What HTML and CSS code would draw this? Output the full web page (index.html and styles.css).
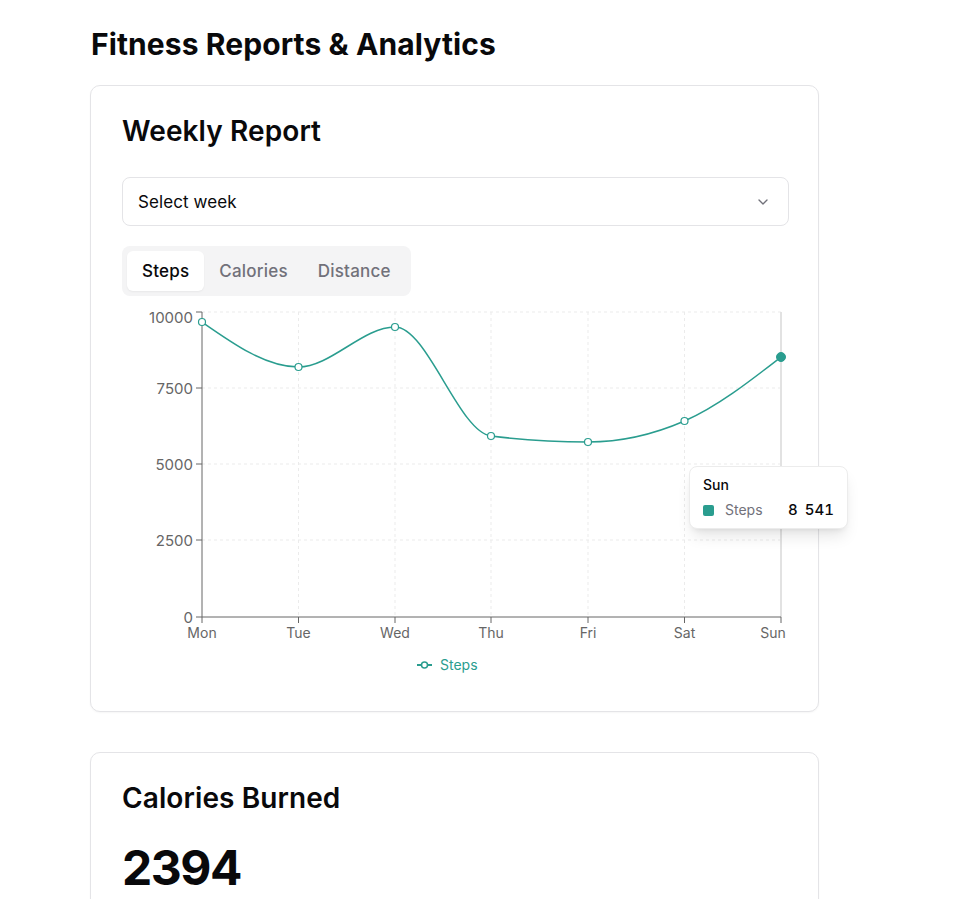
FILE: index.html
```html
<!DOCTYPE html>
<html lang="en">
<head>
<meta charset="utf-8">
<title>Fitness Reports &amp; Analytics</title>
<link rel="stylesheet" href="styles.css">
</head>
<body>
<main class="page">
  <h1 class="page-title">Fitness Reports &amp; Analytics</h1>

  <section class="card">
    <h2 class="card-title">Weekly Report</h2>
    <button class="select" type="button">
      <span>Select week</span>
      <svg class="chevron" width="16" height="16" viewBox="0 0 24 24" fill="none" stroke="currentColor" stroke-width="2" stroke-linecap="round" stroke-linejoin="round"><path d="m6 9 6 6 6-6"/></svg>
    </button>
    <div class="tabs">
      <button class="tab active" type="button">Steps</button>
      <button class="tab" type="button">Calories</button>
      <button class="tab" type="button">Distance</button>
    </div>

    <div class="chart">
      <svg class="chart-svg" width="667" height="384" viewBox="122 296 667 384">
        <g class="grid">
          <line x1="202" y1="312" x2="781" y2="312"/>
          <line x1="202" y1="388" x2="781" y2="388"/>
          <line x1="202" y1="464" x2="781" y2="464"/>
          <line x1="202" y1="540" x2="781" y2="540"/>
          <line x1="298.5" y1="312" x2="298.5" y2="617"/>
          <line x1="395" y1="312" x2="395" y2="617"/>
          <line x1="491" y1="312" x2="491" y2="617"/>
          <line x1="588" y1="312" x2="588" y2="617"/>
          <line x1="684.5" y1="312" x2="684.5" y2="617"/>
        </g>
        <line class="cursor" x1="781" y1="312" x2="781" y2="617"/>
        <g class="axis">
          <line x1="202" y1="312" x2="202" y2="617"/>
          <line x1="202" y1="617" x2="781" y2="617"/>
          <line x1="196" y1="312" x2="202" y2="312"/>
          <line x1="196" y1="388" x2="202" y2="388"/>
          <line x1="196" y1="464" x2="202" y2="464"/>
          <line x1="196" y1="540" x2="202" y2="540"/>
          <line x1="196" y1="617" x2="202" y2="617"/>
          <line x1="202" y1="617" x2="202" y2="623"/>
          <line x1="298.5" y1="617" x2="298.5" y2="623"/>
          <line x1="395" y1="617" x2="395" y2="623"/>
          <line x1="491" y1="617" x2="491" y2="623"/>
          <line x1="588" y1="617" x2="588" y2="623"/>
          <line x1="684.5" y1="617" x2="684.5" y2="623"/>
          <line x1="781" y1="617" x2="781" y2="623"/>
        </g>
        <g class="tick-label y-label">
          <text x="193" y="323">10000</text>
          <text x="193" y="393.5">7500</text>
          <text x="193" y="469.5">5000</text>
          <text x="193" y="545.5">2500</text>
          <text x="193" y="622.5">0</text>
        </g>
        <g class="tick-label x-label">
          <text x="202" y="638">Mon</text>
          <text x="298.5" y="638">Tue</text>
          <text x="395" y="638">Wed</text>
          <text x="491" y="638">Thu</text>
          <text x="588" y="638">Fri</text>
          <text x="684.5" y="638">Sat</text>
          <text x="773" y="638">Sun</text>
        </g>
        <path class="line" d="M202,322 C234.17,344.5 266.33,367 298.5,367 C330.67,367 362.83,327 395,327 C427.17,327 458.83,432 491,436 C523.17,440 555.83,442 588,442 C620.17,442 652.33,435 684.5,421 C716.67,407 748.83,382 781,357"/>
        <g class="dot">
          <circle cx="202" cy="322" r="3.5"/>
          <circle cx="298.5" cy="367" r="3.5"/>
          <circle cx="395" cy="327" r="3.5"/>
          <circle cx="491" cy="436" r="3.5"/>
          <circle cx="588" cy="442" r="3.5"/>
          <circle cx="684.5" cy="421" r="3.5"/>
        </g>
        <circle class="dot-active" cx="781" cy="357" r="4.5"/>
        <g class="legend">
          <line x1="417" y1="665" x2="432" y2="665"/>
          <circle cx="424.5" cy="665" r="3"/>
          <text x="440" y="670">Steps</text>
        </g>
      </svg>
      <div class="tooltip">
        <div class="tooltip-label">Sun</div>
        <div class="tooltip-row">
          <span class="swatch"></span>
          <span class="tooltip-name">Steps</span>
          <span class="tooltip-value">8 541</span>
        </div>
      </div>
    </div>
  </section>

  <section class="card card-second">
    <h2 class="card-title">Calories Burned</h2>
    <div class="big-number">2394</div>
  </section>
</main>
</body>
</html>
```

FILE: styles.css
```css
* {
  box-sizing: border-box;
}

html, body {
  margin: 0;
  background: #ffffff;
}

body {
  font-family: Inter, "Noto Sans", sans-serif;
  color: #09090b;
  overflow: hidden;
  height: 899px;
}

.page {
  width: 819px;
  padding: 26px 0 0 90px;
}

.page-title {
  margin: 0 0 22px 1px;
  font-size: 30px;
  line-height: 37px;
  font-weight: 700;
  letter-spacing: 0.1px;
}

.card {
  width: 729px;
  border: 1px solid #e4e4e7;
  border-radius: 10px;
  padding: 31px;
  box-shadow: 0 1px 2px rgba(0, 0, 0, 0.04);
  background: #fff;
}

.card-second {
  margin-top: 40px;
}

.card-title {
  margin: 0 0 32px 0;
  font-size: 28px;
  line-height: 28px;
  font-weight: 600;
  letter-spacing: 0.1px;
}

.select {
  display: flex;
  align-items: center;
  justify-content: space-between;
  width: 667px;
  height: 49px;
  padding: 0 17px 0 15px;
  border: 1px solid #e4e4e7;
  border-radius: 8px;
  background: #fff;
  font-family: inherit;
  font-size: 17px;
  letter-spacing: 0.1px;
  color: #09090b;
  text-align: left;
}

.chevron {
  color: #71717a;
}

.tabs {
  display: inline-flex;
  margin-top: 20px;
  padding: 5px;
  background: #f4f4f5;
  border-radius: 8px;
}

.tab {
  height: 40px;
  padding: 0 15px;
  border: 0;
  border-radius: 6px;
  background: transparent;
  font-family: inherit;
  font-size: 17px;
  font-weight: 500;
  letter-spacing: 0.2px;
  color: #71717a;
}

.tab.active {
  background: #fff;
  color: #09090b;
  box-shadow: 0 1px 2px rgba(0, 0, 0, 0.05);
}

.chart {
  position: relative;
  width: 667px;
  height: 384px;
}

.chart-svg {
  display: block;
  overflow: visible;
}

.grid line {
  stroke: #ebebeb;
  stroke-dasharray: 3 3;
  stroke-width: 1;
}

.cursor {
  stroke: #e2e2e2;
  stroke-width: 2;
}

.axis line {
  stroke: #666;
  stroke-width: 1;
}

.tick-label text {
  font-family: Inter, "Noto Sans", sans-serif;
  font-size: 14px;
  fill: #666;
}

.y-label text {
  text-anchor: end;
  font-size: 15px;
}

.x-label text {
  text-anchor: middle;
}

.line {
  fill: none;
  stroke: #2a9d8f;
  stroke-width: 1.5;
}

.dot circle {
  fill: #fff;
  stroke: #2a9d8f;
  stroke-width: 1.2;
}

.dot-active {
  fill: #2a9d8f;
  stroke: #2a9d8f;
}

.legend line {
  stroke: #2a9d8f;
  stroke-width: 2;
}

.legend circle {
  fill: #fff;
  stroke: #2a9d8f;
  stroke-width: 1.5;
}

.legend text {
  font-family: Inter, "Noto Sans", sans-serif;
  font-size: 14px;
  fill: #2a9d8f;
}

.tooltip {
  position: absolute;
  left: 567px;
  top: 170px;
  width: 159px;
  padding: 9px 13px;
  background: #fff;
  border: 1px solid #ececec;
  border-radius: 8px;
  box-shadow: 0 10px 15px -3px rgba(0, 0, 0, 0.1), 0 4px 6px -4px rgba(0, 0, 0, 0.1);
  font-size: 14px;
}

.tooltip-label {
  font-weight: 500;
  line-height: 18px;
  color: #09090b;
}

.tooltip-row {
  display: flex;
  align-items: center;
  margin-top: 7px;
  line-height: 18px;
}

.swatch {
  width: 11px;
  height: 11px;
  border-radius: 2px;
  background: #2a9d8f;
  margin-right: 11px;
}

.tooltip-name {
  color: #71717a;
  flex: 1;
}

.tooltip-value {
  font-variant-numeric: tabular-nums;
  font-size: 15px;
  font-weight: 500;
  color: #09090b;
  word-spacing: 3px;
}

.big-number {
  font-size: 48px;
  line-height: 48px;
  font-weight: 700;
  letter-spacing: -1.5px;
}
```
